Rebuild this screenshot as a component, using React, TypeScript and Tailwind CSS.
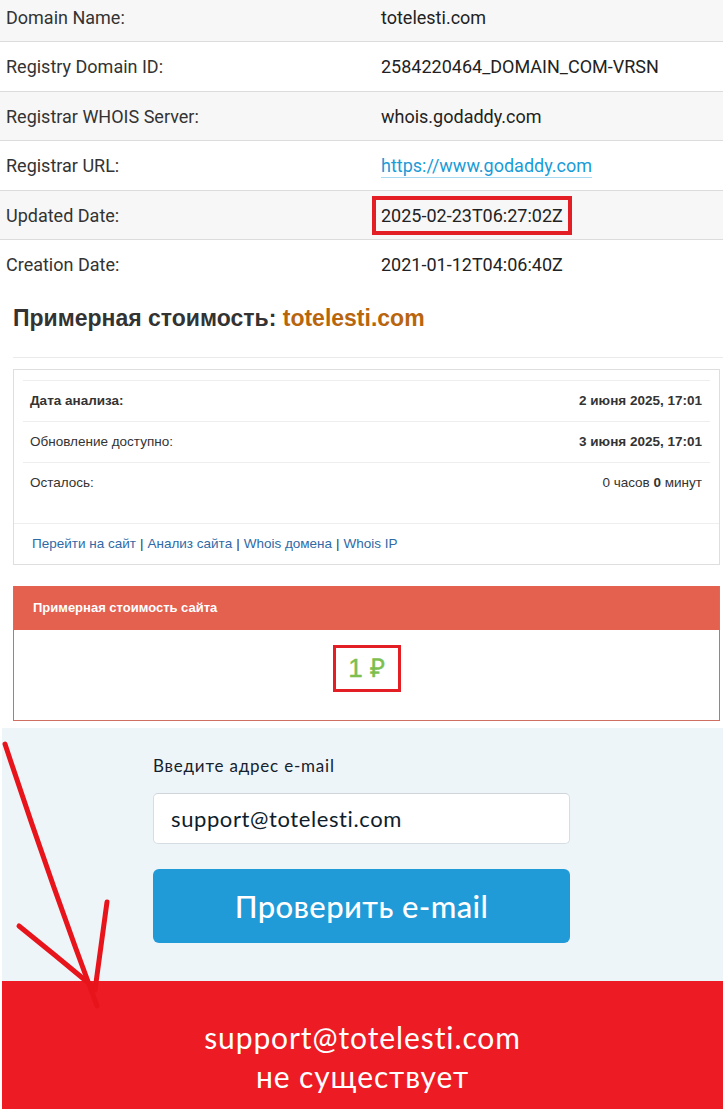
import React from "react";

export default function App() {
  const top = [
    { label: "Domain Name:", value: "totelesti.com" },
    { label: "Registry Domain ID:", value: "2584220464_DOMAIN_COM-VRSN" },
    { label: "Registrar WHOIS Server:", value: "whois.godaddy.com" },
    { label: "Registrar URL:", value: "link" },
    { label: "Updated Date:", value: "boxed" },
    { label: "Creation Date:", value: "2021-01-12T04:06:40Z" },
  ];
  const heights = ["h-[41px] pb-[6px]", "h-[50px]", "h-[49px]", "h-[50px]", "h-[49px]", "h-[50px]"];
  return (
    <div className="relative w-[723px] bg-white overflow-hidden">
      {/* WHOIS table */}
      <div className="font-['Roboto',sans-serif] text-[18px]">
        {top.map((r, i) => (
          <div
            key={r.label}
            className={`grid grid-cols-[375px_1fr] items-center pl-[6px] ${heights[i]} ${
              i > 0 ? "border-t border-[#dcdcdc]" : ""
            } ${i % 2 === 0 ? "bg-[#f7f7f7]" : "bg-white"}`}
          >
            <div className="text-[#333]">{r.label}</div>
            <div className="text-[#222]">
              {r.value === "link" ? (
                <span className="text-[#1a9bd7] border-b border-[#a9d9f1] pb-[1px]">https://www.godaddy.com</span>
              ) : r.value === "boxed" ? (
                <span className="inline-block -ml-[9px] border-4 border-[#e31e24] px-[5px] py-[3px] leading-[25px]">
                  2025-02-23T06:27:02Z
                </span>
              ) : (
                r.value
              )}
            </div>
          </div>
        ))}
      </div>

      {/* Estimated cost */}
      <div className="font-['Liberation_Sans',Arial,sans-serif] pl-[13px]">
        <h2 className="mt-[16px] text-[23px] leading-[26px] font-bold text-[#333]">
          Примерная стоимость: <span className="text-[#b8650e]">totelesti.com</span>
        </h2>
        <div className="mt-[26px] border-t border-[#eaeaea]" />
        <div className="mt-[11px] mr-[3px] border border-[#dedede] text-[13.5px] text-[#333]">
          <div className="px-[9px] pt-[10px] pb-[20px]">
            <div className="flex h-[41px] items-center justify-between border-t border-[#eeeeee] px-[7px] pr-[8px]">
              <span className="font-bold">Дата анализа:</span>
              <span className="font-bold">2 июня 2025, 17:01</span>
            </div>
            <div className="flex h-[41px] items-center justify-between border-t border-[#eeeeee] px-[7px] pr-[8px]">
              <span>Обновление доступно:</span>
              <span className="font-bold">3 июня 2025, 17:01</span>
            </div>
            <div className="flex h-[41px] items-center justify-between border-t border-[#eeeeee] px-[7px] pr-[8px]">
              <span>Осталось:</span>
              <span>
                0 часов <b>0</b> минут
              </span>
            </div>
          </div>
          <div className="flex h-[41px] items-center border-t border-[#eeeeee] px-[18px]">
            <span className="text-[#2f6aa6]">Перейти на сайт</span>
            <span className="mx-[4px]">|</span>
            <span className="text-[#2f6aa6]">Анализ сайта</span>
            <span className="mx-[4px]">|</span>
            <span className="text-[#2f6aa6]">Whois домена</span>
            <span className="mx-[4px]">|</span>
            <span className="text-[#2f6aa6]">Whois IP</span>
          </div>
        </div>

        <div className="mt-[21px] mr-[3px] border-x border-b border-[#cf6f61]">
          <div className="flex h-[44px] items-center bg-[#e4604f] px-[19px] text-[13px] font-bold text-white">
            Примерная стоимость сайта
          </div>
          <div className="flex justify-center pt-[15px] pb-[28px]">
            <div className="flex h-[47px] w-[68px] items-center justify-center border-[3px] border-[#e31e24] text-[26px] text-[#7dbf4e] [-webkit-text-stroke:0.4px_#7dbf4e]">
              1 ₽
            </div>
          </div>
        </div>
      </div>

      {/* Email check */}
      <div className="mt-[7px] ml-[2px] font-['Lato',sans-serif]">
        <div className="bg-[#eef5f9] pt-[26px] pb-[38px]">
          <div className="mx-auto w-[417px] -translate-x-[1px]">
            <div className="text-[17px] leading-[24px] tracking-[0.8px] text-[#15212d]">Введите адрес e-mail</div>
            <div className="mt-[15px] flex h-[51px] items-center rounded-[5px] border border-[#d6dde3] border-t-[#cfd5da] bg-white pl-[17px] text-[22px] tracking-[0.6px] text-[#0e1d2b]">
              support@totelesti.com
            </div>
            <div className="mt-[25px] flex h-[74px] items-center justify-center rounded-[6px] bg-[#219ad8] text-[31px] tracking-[0.4px] font-medium text-white">
              Проверить e-mail
            </div>
          </div>
        </div>
        <div className="h-[140px] bg-[#ed1b24] pt-[37px] text-center text-[30px] leading-[39px] tracking-[0.9px] text-white">
          <div>support@totelesti.com</div>
          <div>не существует</div>
        </div>
      </div>

      {/* Hand-drawn arrow */}
      <svg
        className="pointer-events-none absolute left-0 top-0"
        width="723"
        height="1109"
        viewBox="0 0 723 1109"
      >
        <g stroke="#e8141c" strokeWidth="5" strokeLinecap="round" fill="none">
          <path d="M5 744 Q50 880 97 1006" />
          <path d="M19 926 Q55 955 91 985" />
          <path d="M107 902 Q101 945 95 990" />
        </g>
      </svg>
    </div>
  );
}
